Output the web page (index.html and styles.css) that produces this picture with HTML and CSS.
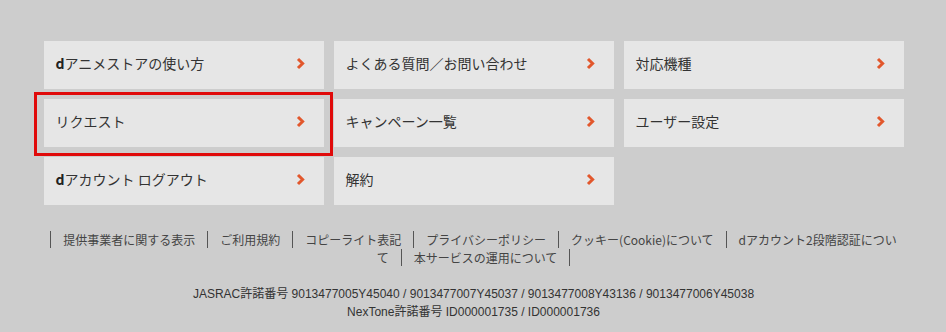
FILE: index.html
```html
<!DOCTYPE html>
<html lang="ja">
<head>
<meta charset="utf-8">
<title>dアニメストア</title>
<link rel="stylesheet" href="styles.css">
</head>
<body>
<div class="page">
  <nav class="menu">
    <a class="tile" href="#"><span class="label"><b>d</b>アニメストアの使い方</span><svg class="chev" viewBox="0 0 9 13" width="9" height="13"><polyline points="2,2 6.6,6.5 2,11"/></svg></a>
    <a class="tile" href="#"><span class="label">よくある質問／お問い合わせ</span><svg class="chev" viewBox="0 0 9 13" width="9" height="13"><polyline points="2,2 6.6,6.5 2,11"/></svg></a>
    <a class="tile" href="#"><span class="label">対応機種</span><svg class="chev" viewBox="0 0 9 13" width="9" height="13"><polyline points="2,2 6.6,6.5 2,11"/></svg></a>
    <a class="tile tile-marked" href="#"><span class="label">リクエスト</span><svg class="chev" viewBox="0 0 9 13" width="9" height="13"><polyline points="2,2 6.6,6.5 2,11"/></svg><span class="mark"></span></a>
    <a class="tile" href="#"><span class="label">キャンペーン一覧</span><svg class="chev" viewBox="0 0 9 13" width="9" height="13"><polyline points="2,2 6.6,6.5 2,11"/></svg></a>
    <a class="tile" href="#"><span class="label">ユーザー設定</span><svg class="chev" viewBox="0 0 9 13" width="9" height="13"><polyline points="2,2 6.6,6.5 2,11"/></svg></a>
    <a class="tile" href="#"><span class="label"><b>d</b>アカウント ログアウト</span><svg class="chev" viewBox="0 0 9 13" width="9" height="13"><polyline points="2,2 6.6,6.5 2,11"/></svg></a>
    <a class="tile" href="#"><span class="label">解約</span><svg class="chev" viewBox="0 0 9 13" width="9" height="13"><polyline points="2,2 6.6,6.5 2,11"/></svg></a>
  </nav>
  <p class="links"><a href="#" class="link">提供事業者に関する表示</a><a href="#" class="link">ご利用規約</a><a href="#" class="link">コピーライト表記</a><a href="#" class="link">プライバシーポリシー</a><a href="#" class="link">クッキー(Cookie)について</a><a href="#" class="link">dアカウント2段階認証について</a><a href="#" class="link link-last">本サービスの運用について</a></p>
  <p class="rights">JASRAC許諾番号 9013477005Y45040 / 9013477007Y45037 / 9013477008Y43136 / 9013477006Y45038<br>NexTone許諾番号 ID000001735 / ID000001736</p>
</div>
</body>
</html>
```
FILE: styles.css
```css
html, body {
  margin: 0;
  padding: 0;
  background: #cdcdcd;
}
body {
  font-family: "Noto Sans CJK JP", "Liberation Sans", sans-serif;
  color: #333;
}
.page {
  width: 860px;
  margin: 0 auto;
  padding-top: 41px;
  padding-left: 1px;
}
.menu {
  display: grid;
  grid-template-columns: repeat(3, 280px);
  grid-auto-rows: 48px;
  gap: 10px;
}
.tile {
  position: relative;
  display: flex;
  align-items: center;
  justify-content: space-between;
  background: #e6e6e6;
  padding: 0 19px 4px 12px;
  text-decoration: none;
  color: #333;
  font-size: 14px;
}
.label b {
  font-weight: 700;
  color: #222;
}
.chev {
  display: block;
  fill: none;
  stroke: #e2572c;
  stroke-width: 3;
  stroke-linejoin: miter;
}
.mark {
  position: absolute;
  left: -10px;
  top: -7px;
  right: -9px;
  bottom: -9px;
  border: 3px solid #e00a0a;
  pointer-events: none;
}
.links {
  width: 852px;
  margin: 26px auto 0;
  text-align: center;
  font-size: 12px;
  line-height: 18px;
}
.link {
  color: #444;
  text-decoration: none;
  border-left: 1px solid #555;
  padding: 0 12px;
}
.link-last {
  border-right: 1px solid #555;
}
.rights {
  margin: 18px 0 0;
  text-align: center;
  font-family: "Liberation Sans", "Noto Sans CJK JP", sans-serif;
  font-size: 12px;
  line-height: 18px;
  color: #333;
}
```
